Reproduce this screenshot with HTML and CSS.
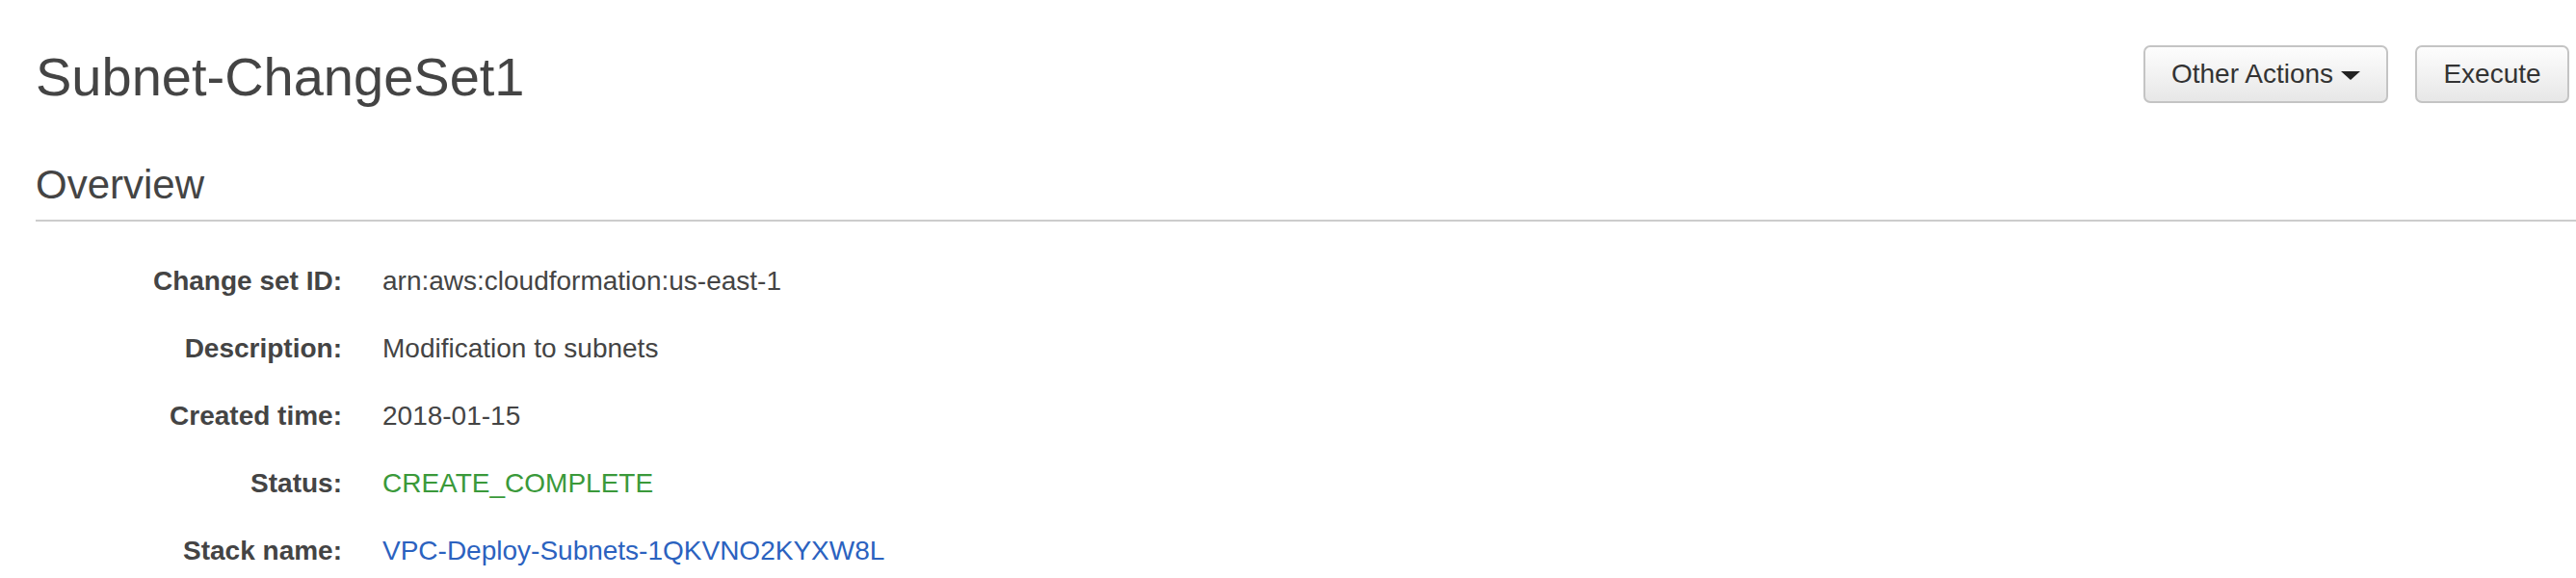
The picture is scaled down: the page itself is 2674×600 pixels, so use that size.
FILE: index.html
```html
<!DOCTYPE html>
<html>
<head>
<meta charset="utf-8">
<link rel="stylesheet" href="styles.css">
</head>
<body>
<div class="page">
  <header class="header">
    <h1 class="title">Subnet-ChangeSet1</h1>
    <div class="actions">
      <button class="btn btn-wide">Other Actions <span class="caret"></span></button>
      <button class="btn btn-exec">Execute</button>
    </div>
  </header>
  <h2 class="section-title">Overview</h2>
  <dl class="details">
    <dt>Change set ID:</dt>
    <dd><span class="clip">arn:aws:cloudformation:us-east-1</span></dd>
    <dt>Description:</dt>
    <dd>Modification to subnets</dd>
    <dt>Created time:</dt>
    <dd>2018-01-15</dd>
    <dt>Status:</dt>
    <dd class="status-ok">CREATE_COMPLETE</dd>
    <dt>Stack name:</dt>
    <dd><a class="link" href="#">VPC-Deploy-Subnets-1QKVNO2KYXW8L</a></dd>
  </dl>
</div>
</body>
</html>
```
FILE: styles.css
```css
html, body {
  margin: 0;
  padding: 0;
  background: #ffffff;
}
body {
  font-family: "Liberation Sans", Arial, Helvetica, sans-serif;
  color: #444444;
}
.page {
  padding: 47px 0 0 37px;
}
.header {
  display: flex;
  justify-content: space-between;
  align-items: flex-start;
  padding-right: 7px;
}
.title {
  margin: 1px 0 0 0;
  font-size: 56px;
  font-weight: normal;
  line-height: 64px;
  color: #444444;
}
.actions {
  display: flex;
  gap: 28px;
}
.btn {
  font-family: "Liberation Sans", Arial, Helvetica, sans-serif;
  font-size: 28px;
  color: #333333;
  height: 60px;
  border: 2px solid #c4c4c4;
  border-radius: 7px;
  background: linear-gradient(#fdfdfd, #e7e7e7);
  padding: 0;
  display: flex;
  align-items: center;
  justify-content: center;
  gap: 8px;
}
.btn-wide {
  width: 254px;
}
.btn-exec {
  width: 160px;
}
.caret {
  width: 0;
  height: 0;
  border-left: 10px solid transparent;
  border-right: 10px solid transparent;
  border-top: 9px solid #222222;
  margin-top: 2px;
}
.section-title {
  margin: 55px 0 0 0;
  font-size: 42px;
  font-weight: normal;
  line-height: 50px;
  color: #444444;
  padding-bottom: 11px;
  border-bottom: 2px solid #cccccc;
}
.details {
  margin: 27px 0 0 0;
  display: grid;
  grid-template-columns: 318px 1fr;
  column-gap: 42px;
  font-size: 28px;
  line-height: 70px;
}
.details dt {
  font-weight: bold;
  text-align: right;
  color: #444444;
}
.details dd {
  margin: 0;
  color: #444444;
}
.clip {
  display: inline-block;
  vertical-align: top;
}
.status-ok {
  color: #3a993a !important;
}
.link {
  color: #2b62bf;
  text-decoration: none;
}
```
